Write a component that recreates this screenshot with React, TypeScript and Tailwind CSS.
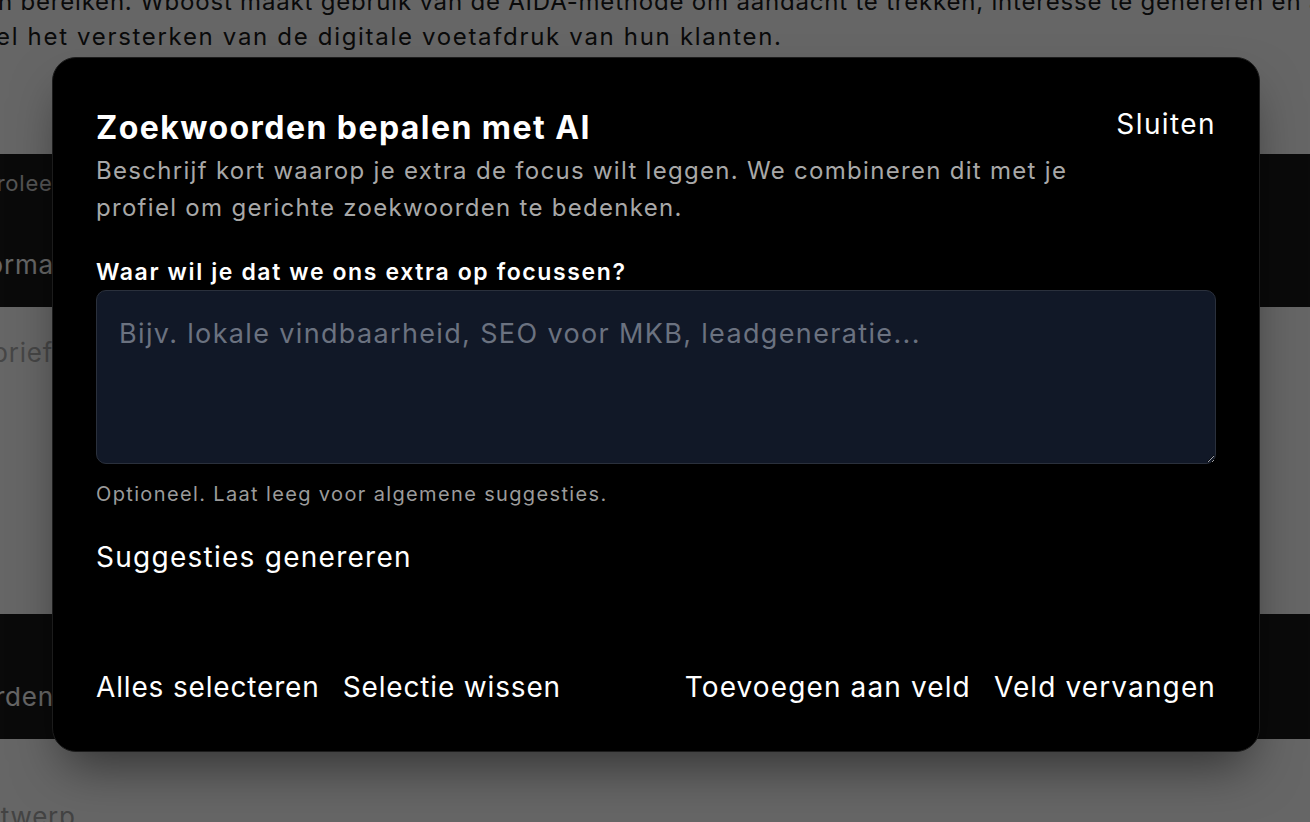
import React from 'react';

const FONT = { fontFamily: 'Inter, "Noto Sans", Arial, sans-serif' };

function BackgroundPage() {
  return (
    <div className="w-full text-[#1a1a1a] tracking-[0.05em]">
      <div className="-mt-[16px] text-[24px] leading-[35px] whitespace-nowrap">
        <p className="-ml-[2px]">n bereiken. Wboost maakt gebruik van de AIDA-methode om aandacht te trekken, interesse te genereren en actie</p>
        <p className="-ml-[4px] tracking-[0.07em]">el het versterken van de digitale voetafdruk van hun klanten.</p>
      </div>

      <div className="mt-[100px] h-[153px] bg-[#1a1a1a] flex flex-col whitespace-nowrap">
        <div className="mt-[16px] -ml-[56px] text-[22px] leading-[26px] text-[#d4d4d4]">Controleer</div>
        <div className="mt-[53px] -ml-[46px] text-[26px] leading-[32px] text-white">Informatie</div>
      </div>

      <div className="h-[154px] whitespace-nowrap">
        <div className="mt-[30px] -ml-[8px] text-[26px] leading-[32px] text-[#b0b0b0]">briefing</div>
      </div>

      <div className="h-[123px] whitespace-nowrap"></div>

      <div className="h-[125px] bg-[#1a1a1a] whitespace-nowrap">
        <div className="pt-[67px] -ml-[124px] text-[26px] leading-[32px] text-white">Zoekwoorden</div>
      </div>

      <div className="whitespace-nowrap">
        <div className="mt-[62px] -ml-[36px] text-[26px] leading-[32px] text-[#a8a8a8]">Ontwerp</div>
      </div>
    </div>
  );
}

export default function App() {
  return (
    <div className="relative h-[822px] w-full overflow-hidden bg-white" style={FONT}>
      <BackgroundPage />

      <div className="absolute inset-0 bg-black/60 flex justify-center pt-[57px] pl-[2px]">
        <div className="w-[1208px] h-[695px] bg-black rounded-[24px] border border-[#1c1c1c] shadow-2xl shadow-black/50 px-[43px] pt-[43px] pb-[43px] flex flex-col text-white">
          {/* header */}
          <div className="flex items-start justify-between">
            <div>
              <h2 className="text-[32px] leading-[48px] font-bold tracking-[0.045em] mt-[3px]">Zoekwoorden bepalen met AI</h2>
              <p className="text-[24px] leading-[37px] text-[#a8a8a8] tracking-[0.054em] mt-0">
                Beschrijf kort waarop je extra de focus wilt leggen. We combineren dit met je
                <br />
                profiel om gerichte zoekwoorden te bedenken.
              </p>
            </div>
            <button className="text-[28px] leading-[40px] mt-[3px] tracking-[0.05em] text-white">Sluiten</button>
          </div>

          {/* focus field */}
          <label className="mt-[32px] text-[23px] leading-[28px] font-semibold tracking-[0.07em]">Waar wil je dat we ons extra op focussen?</label>
          <textarea
            className="mt-[4px] h-[174px] w-full resize-y rounded-[10px] border border-[#2a303c] bg-[#111827] px-[22px] py-[22px] text-[27px] leading-[42px] tracking-[0.05em] text-white placeholder:text-[#6b7280] outline-none"
            placeholder="Bijv. lokale vindbaarheid, SEO voor MKB, leadgeneratie..."
          />
          <p className="mt-[17px] text-[20px] leading-[26px] tracking-[0.068em] text-[#9b9b9b]">Optioneel. Laat leeg voor algemene suggesties.</p>

          <button className="mt-[30px] self-start text-[28px] leading-[40px] tracking-[0.045em]">Suggesties genereren</button>

          {/* footer actions */}
          <div className="mt-auto flex items-center justify-between text-[28px] leading-[42px]">
            <div className="flex gap-[23px] tracking-[0.03em]">
              <button>Alles selecteren</button>
              <button>Selectie wissen</button>
            </div>
            <div className="flex gap-[23px] tracking-[0.04em]">
              <button>Toevoegen aan veld</button>
              <button>Veld vervangen</button>
            </div>
          </div>
        </div>
      </div>
    </div>
  );
}
